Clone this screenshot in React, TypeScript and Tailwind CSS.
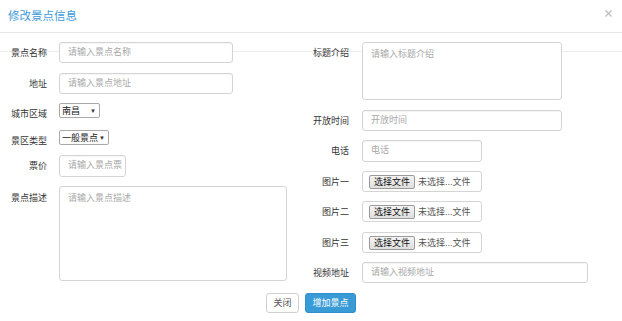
const font = { fontFamily: '"Liberation Sans","Noto Sans CJK SC",sans-serif' };

function Label({ text, w, className = '' }: { text: string; w: string; className?: string }) {
  return (
    <div className={`${w} shrink-0 text-right text-[9px] leading-[12px] text-[#333] ${className}`}>{text}</div>
  );
}

function TextInput({ placeholder, w, h = 'h-[21px]' }: { placeholder: string; w: string; h?: string }) {
  return (
    <div className={`${w} ${h} flex items-center overflow-hidden whitespace-nowrap rounded-[3px] border border-[#d4d4d4] bg-white px-[8px] text-[9px] text-[#a8a8a8] shadow-[inset_0_1px_1px_rgba(0,0,0,0.04)]`}>
      {placeholder}
    </div>
  );
}

function TextArea({ placeholder, w, h }: { placeholder: string; w: string; h: string }) {
  return (
    <div className={`${w} ${h} rounded-[3px] border border-[#d4d4d4] bg-white px-[8px] pt-[5px] text-[9px] leading-[12px] text-[#a8a8a8]`}>
      {placeholder}
    </div>
  );
}

function FakeSelect({ value, w }: { value: string; w: string }) {
  return (
    <div className={`${w} flex h-[15px] items-center justify-between rounded-[2px] border border-[#a9a9a9] bg-white pl-[2px] pr-[3px] text-[9px] leading-[12px] text-[#222]`}>
      <span>{value}</span>
      <span className="text-[6px] text-[#333]">▼</span>
    </div>
  );
}

function FileInput() {
  return (
    <div className="flex h-[21px] w-[120px] items-center rounded-[3px] border border-[#d4d4d4] bg-white pl-[6px]">
      <div className="flex h-[14px] w-[46px] items-center justify-center rounded-[2px] border border-[#9a9a9a] bg-[linear-gradient(#f4f4f4,#dedede)] text-[9px] leading-[12px] text-[#111]">
        选择文件
      </div>
      <span className="ml-[3px] text-[9px] leading-[12px] text-[#555]">未选择...文件</span>
    </div>
  );
}

export default function App() {
  return (
    <div style={font} className="relative h-[321px] w-[622px] overflow-hidden bg-white">
      <div className="flex h-[33px] items-center justify-between border-b border-[#e5e5e5] pl-[8px] pr-[10px]">
        <span className="text-[11.5px] leading-[14px] text-[#3d9ad8]">修改景点信息</span>
        <svg width="7" height="7" viewBox="0 0 7 7" className="mb-[6px]">
          <path d="M0.5 0.5L6.5 6.5M6.5 0.5L0.5 6.5" stroke="#bdbdbd" strokeWidth="1.3" />
        </svg>
      </div>

      <div className="relative pt-[9px]">
        <div className="absolute left-0 right-0 top-[18px] h-px bg-[#ececec]" />

        <div className="relative flex">
          {/* left column */}
          <div className="flex w-[300px] flex-col">
            <div className="flex items-center">
              <Label text="景点名称" w="w-[47px]" />
              <div className="ml-[12px]"><TextInput placeholder="请输入景点名称" w="w-[174px]" /></div>
            </div>
            <div className="mt-[10px] flex items-center">
              <Label text="地址" w="w-[47px]" />
              <div className="ml-[12px]"><TextInput placeholder="请输入景点地址" w="w-[174px]" /></div>
            </div>
            <div className="mt-[9px] flex items-start">
              <Label text="城市区域" w="w-[47px]" className="mt-[5px]" />
              <div className="ml-[12px]"><FakeSelect value="南昌" w="w-[41px]" /></div>
            </div>
            <div className="mt-[10px] flex items-start">
              <Label text="景区类型" w="w-[47px]" className="mt-[5px]" />
              <div className="ml-[12px]"><FakeSelect value="一般景点" w="w-[50px]" /></div>
            </div>
            <div className="mt-[8px] flex items-center">
              <Label text="票价" w="w-[47px]" />
              <div className="ml-[12px]"><TextInput placeholder="请输入景点票" w="w-[67px]" h="h-[22px]" /></div>
            </div>
            <div className="mt-[9px] flex items-start">
              <Label text="景点描述" w="w-[47px]" className="mt-[6px]" />
              <div className="ml-[12px]"><TextArea placeholder="请输入景点描述" w="w-[228px]" h="h-[95px]" /></div>
            </div>
          </div>

          {/* right column */}
          <div className="flex flex-col">
            <div className="flex items-start">
              <Label text="标题介绍" w="w-[49px]" className="mt-[5px]" />
              <div className="ml-[13px]"><TextArea placeholder="请输入标题介绍" w="w-[200px]" h="h-[58px]" /></div>
            </div>
            <div className="mt-[10px] flex items-center">
              <Label text="开放时间" w="w-[49px]" />
              <div className="ml-[13px]"><TextInput placeholder="开放时间" w="w-[200px]" /></div>
            </div>
            <div className="mt-[9px] flex items-center">
              <Label text="电话" w="w-[49px]" />
              <div className="ml-[13px]"><TextInput placeholder="电话" w="w-[120px]" h="h-[22px]" /></div>
            </div>
            <div className="mt-[9px] flex items-center">
              <Label text="图片一" w="w-[49px]" />
              <div className="ml-[13px]"><FileInput /></div>
            </div>
            <div className="mt-[9px] flex items-center">
              <Label text="图片二" w="w-[49px]" />
              <div className="ml-[13px]"><FileInput /></div>
            </div>
            <div className="mt-[10px] flex items-center">
              <Label text="图片三" w="w-[49px]" />
              <div className="ml-[13px]"><FileInput /></div>
            </div>
            <div className="mt-[9px] flex items-center">
              <Label text="视频地址" w="w-[49px]" />
              <div className="ml-[13px]"><TextInput placeholder="请输入视频地址" w="w-[226px]" /></div>
            </div>
          </div>
        </div>

        <div className="mt-[10px] flex justify-center gap-[6px]">
          <button className="flex h-[20px] w-[33px] items-center justify-center rounded-[3px] border border-[#d0d0d0] bg-white text-[9px] leading-[12px] text-[#555]">
            关闭
          </button>
          <button className="flex h-[20px] w-[51px] items-center justify-center rounded-[3px] border border-[#2f8fcc] bg-[#389bd6] text-[9px] leading-[12px] text-white">
            增加景点
          </button>
        </div>
      </div>
    </div>
  );
}
